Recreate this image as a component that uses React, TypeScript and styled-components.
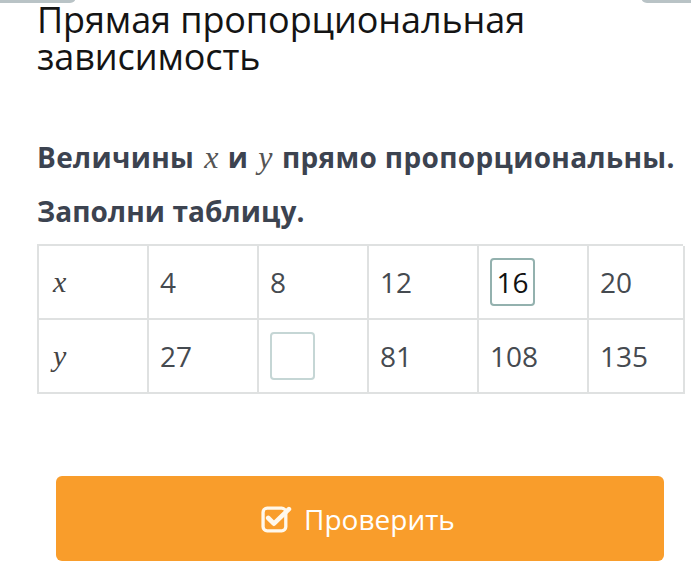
import React from "react";
import styled, { createGlobalStyle } from "styled-components";

const GlobalStyle = createGlobalStyle`
  html, body {
    margin: 0;
    padding: 0;
    background: #fff;
  }
  body {
    font-family: "Open Sans", "Noto Sans", sans-serif;
    -webkit-font-smoothing: antialiased;
  }
`;

const Page = styled.main`
  position: relative;
  width: 691px;
  height: 581px;
  overflow: hidden;
  padding: 0 8px 0 37px;
  box-sizing: border-box;
`;

const Tab = styled.div<{ $side: "left" | "right" }>`
  position: absolute;
  top: -4px;
  height: 7px;
  background: #b9c3c6;
  ${(p) =>
    p.$side === "left"
      ? "left: 0; width: 76px; border-radius: 0 0 6px 0;"
      : "right: 0; width: 50px; border-radius: 0 0 0 6px;"}
`;

const Title = styled.h1`
  margin: 0;
  padding-top: 1px;
  font-size: 36px;
  font-weight: 400;
  line-height: 37px;
  color: #141414;
  letter-spacing: -0.1px;
`;

const Question = styled.p`
  margin: 66px 0 0 0;
  font-size: 28px;
  font-weight: 700;
  line-height: 32px;
  letter-spacing: 0.35px;
  color: #3c4350;
  white-space: nowrap;
`;

const Instruction = styled(Question)`
  margin-top: 22px;
  letter-spacing: 0.1px;
`;

const MathVar = styled.span`
  font-family: "Liberation Serif", "DejaVu Serif", serif;
  font-style: italic;
  font-weight: 400;
  font-size: 32px;
  color: #555;
  margin: 0 9px 0 10px;
`;

const Table = styled.div`
  margin-top: 17px;
  width: 646px;
  display: grid;
  grid-template-columns: repeat(5, 110px) 96px;
  grid-auto-rows: 74px;
  border-top: 2px solid #dfe1e1;
  border-left: 2px solid #dfe1e1;
  box-sizing: border-box;
`;

const Cell = styled.div`
  display: flex;
  align-items: center;
  padding-left: 11px;
  border-right: 2px solid #dfe1e1;
  border-bottom: 2px solid #dfe1e1;
  font-size: 28px;
  color: #454a50;
`;

const HeadVar = styled(MathVar)`
  font-size: 30px;
  color: #444;
  margin: 0 0 0 3px;
`;

const Input = styled.div<{ $filled?: boolean }>`
  width: 45px;
  height: 48px;
  box-sizing: border-box;
  border: 2px solid ${(p) => (p.$filled ? "#93b1ae" : "#c5d6d5")};
  border-radius: 4px;
  display: flex;
  align-items: center;
  justify-content: center;
  font-size: 28px;
  color: #111;
`;

const Button = styled.button`
  margin: 82px 0 0 19px;
  width: 608px;
  height: 85px;
  border: none;
  border-radius: 6px;
  background: #f99d2b;
  color: #fff;
  font-family: "Open Sans", "Noto Sans", sans-serif;
  font-size: 28px;
  display: flex;
  align-items: center;
  justify-content: center;
  gap: 12px;
  padding: 0 4px 0 0;
`;

const CheckIcon = () => (
  <svg width="31" height="29" viewBox="0 0 30 28" fill="none">
    <rect x="2" y="4" width="22" height="22" rx="4" stroke="#fff8ec" strokeWidth="3.2" />
    <path d="M7 13.5 L12.5 19 L27 5" stroke="#fff8ec" strokeWidth="4.5" strokeLinecap="round" strokeLinejoin="round" />
  </svg>
);

const xs = ["4", "8", "12", "16", "20"];
const ys = ["27", "", "81", "108", "135"];

export default function App() {
  return (
    <Page>
      <GlobalStyle />
      <Tab $side="left" />
      <Tab $side="right" />
      <Title>
        Прямая пропорциональная
        <br />
        зависимость
      </Title>
      <Question>
        Величины<MathVar>x</MathVar>и<MathVar>y</MathVar>прямо пропорциональны.
      </Question>
      <Instruction>Заполни таблицу.</Instruction>
      <Table>
        <Cell>
          <HeadVar>x</HeadVar>
        </Cell>
        {xs.map((v, i) => (
          <Cell key={"x" + i}>{v === "16" ? <Input $filled>16</Input> : v}</Cell>
        ))}
        <Cell>
          <HeadVar>y</HeadVar>
        </Cell>
        {ys.map((v, i) => (
          <Cell key={"y" + i}>{v === "" ? <Input /> : v}</Cell>
        ))}
      </Table>
      <Button>
        <CheckIcon />
        Проверить
      </Button>
    </Page>
  );
}
